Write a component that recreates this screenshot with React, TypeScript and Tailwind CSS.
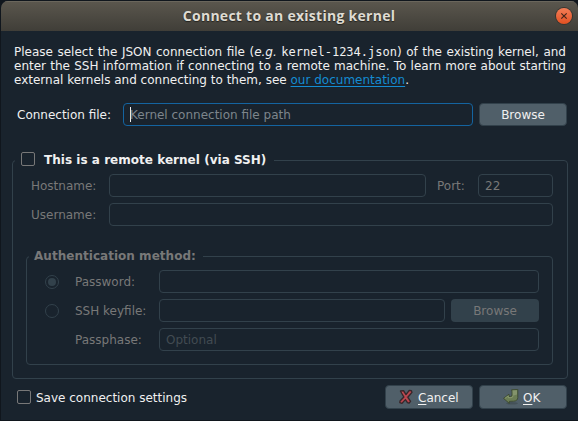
import React from "react";

const inputBase = "flex h-[23px] items-center rounded-[4px] border px-[6px] whitespace-pre";

function Field({ className = "", children }: { className?: string; children?: React.ReactNode }) {
  return <div className={`${inputBase} border-[#32414b] ${className}`}>{children}</div>;
}

function Radio({ checked = false }: { checked?: boolean }) {
  return (
    <span className="flex h-[14px] w-[14px] items-center justify-center rounded-full border border-[#32414b]">
      {checked && <span className="h-2 w-2 rounded-full bg-[#32414b]" />}
    </span>
  );
}

function CancelIcon() {
  return (
    <svg width="16" height="16" viewBox="0 0 16 16">
      <path d="M2.4 2 5.6 1.6 8 5.6 11.2 1.4 13.4 1.6 14 3.4 9.8 8.2 12.6 12.4 11 14.2 9.4 13.6 7.4 10.6 4 14.4 1.8 13.6 2 12 5.8 8Z" fill="#b03f47" stroke="#35272b" strokeWidth="1.3" strokeLinejoin="round" />
      <path d="M4.2 3 7.8 7.6 12.3 3M3.4 12.8 7.7 8.6 10.7 12.6" fill="none" stroke="#c4525b" strokeWidth=".8" />
    </svg>
  );
}

function OkIcon() {
  return (
    <svg width="16" height="16" viewBox="0 0 16 16">
      <ellipse cx="9" cy="14.3" rx="6" ry="1.3" fill="#3d4a50" opacity=".65" />
      <path d="M8.6.8 14.8.4V8.5Q14.7 12 10.5 12.2L6.4 12.3V14.4L.5 9.4 6 5.2V7.5H7.5Q9 7.5 9 6V2.6Z" fill="#6b7d54" stroke="#3c4930" strokeWidth=".9" strokeLinejoin="round" />
      <path d="M9.6 1.6 14 1.3V5.4L9.8 6.8Z" fill="#84946c" />
      <path d="M2 9.3 5.3 6.8V8.7H8Q10 8.6 10 6.8" fill="none" stroke="#8d9d74" strokeWidth=".8" />
    </svg>
  );
}

export default function App() {
  return (
    <div className="h-[421px] w-[578px] bg-[#10161d] pt-px pl-px font-['DejaVu_Sans',sans-serif] text-[12px] leading-[14px] text-[#f0f0f0]">
      <div className="h-[419px] w-[577px] overflow-hidden rounded-t-[7px] bg-[#19232d]">
        <header className="flex h-[30px] items-center bg-linear-to-b from-[#5b574e] to-[#403e38] pr-[6px] pl-[21px] shadow-[inset_0_1px_0_#6a665c]">
          <h1 className="flex-1 text-center font-['Open_Sans',sans-serif] text-[14px] font-bold tracking-[0.27px] text-[#dfdbd2] [text-shadow:0_1px_1px_#24231f]">
            Connect to an existing kernel
          </h1>
          <button className="flex h-4 w-4 items-center justify-center rounded-full bg-linear-to-b from-[#f37d56] to-[#e3501f] shadow-[0_0_0_1px_#38352f]">
            <svg width="8" height="8" viewBox="0 0 8 8">
              <path d="M1.3 1.3 6.7 6.7M6.7 1.3 1.3 6.7" stroke="#47261a" strokeWidth="1.2" />
            </svg>
          </button>
        </header>

        <div className="px-[11px] pt-[14px]">
          <div className="ml-[2px] w-[552px]">
            <p className="[text-align-last:justify]">
              Please select the JSON connection file (<i>e.g.</i>{" "}
              <code className="font-['DejaVu_Sans_Mono',monospace] text-[12px] leading-none whitespace-nowrap">kernel-1234.json</code>) of the existing kernel, and
            </p>
            <p className="[text-align-last:justify]">
              enter the SSH information if connecting to a remote machine. To learn more about starting
            </p>
            <p>
              external kernels and connecting to them, see{" "}
              <a className="text-[#148cd2] underline decoration-1 underline-offset-2">our documentation</a>.
            </p>
          </div>

          <div className="mt-[16px] flex items-center pl-[5px]">
            <span className="w-[106px]">Connection file:</span>
            <div className={`${inputBase} w-[350px] border-[#1464a0] text-[#7d858b]`}>
              <span className="h-[15px] w-px bg-[#f0f0f0]" />
              <span className="-ml-px">Kernel connection file path</span>
            </div>
            <button className="ml-[6px] h-[23px] w-[88px] rounded-[4px] border border-[#32414b] bg-[#505f69]">Browse</button>
          </div>

          <fieldset className="mt-[27px] h-[226px] w-[556px] rounded-[4px] border border-[#32414b] pl-[13px] text-[#787878]">
            <legend className="-ml-[11px] flex h-[15px] w-[259px] items-center pb-px pl-[6px] font-bold text-[#f0f0f0]">
              <span className="-mt-[2px] mr-[9px] h-[14px] w-[14px] rounded-[2px] border border-[#787878]" />
              <span className="-mt-px tracking-[0.03px] whitespace-nowrap">This is a remote kernel (via SSH)</span>
            </legend>
            <div className="mt-[6px] flex items-center pl-[5px]">
              <span className="w-[78px]">Hostname:</span>
              <Field className="w-[317px]" />
              <span className="ml-[11px] w-[41px]">Port:</span>
              <Field className="w-[75px]">22</Field>
            </div>
            <div className="mt-[6px] flex items-center pl-[5px]">
              <span className="w-[78px]">Username:</span>
              <Field className="w-[444px]" />
            </div>

            <fieldset className="mt-[23px] h-[116px] w-[527px] rounded-[4px] border border-[#32414b] pl-[18px]">
              <legend className="-ml-[16px] h-[15px] w-[174px] pl-[5px] font-bold tracking-[0.03px] whitespace-nowrap">Authentication method:</legend>
              <div className="mt-[6px] flex items-center">
                <Radio checked />
                <span className="ml-[16px] w-[84px]">Password:</span>
                <Field className="w-[380px]" />
              </div>
              <div className="mt-[6px] flex items-center">
                <Radio />
                <span className="ml-[16px] w-[84px] whitespace-nowrap">SSH keyfile:</span>
                <Field className="w-[286px]" />
                <button className="ml-[6px] h-[23px] w-[88px] rounded-[4px] bg-[#32414b]">Browse</button>
              </div>
              <div className="mt-[6px] flex items-center pl-[30px]">
                <span className="w-[84px]">Passphase:</span>
                <Field className="w-[380px] text-[#424b52]">Optional</Field>
              </div>
            </fieldset>
          </fieldset>

          <footer className="mt-[6px] flex items-center pl-[5px]">
            <span className="h-[14px] w-[14px] rounded-[2px] border border-[#787878]" />
            <span className="ml-[5px] w-[349px] pt-[2px]">Save connection settings</span>
            <button className="flex h-6 w-[88px] items-center rounded-[4px] border border-[#32414b] bg-[#505f69] pl-[12px]">
              <CancelIcon />
              <span className="ml-[4px] pt-[2px]"><span className="underline underline-offset-2">C</span>ancel</span>
            </button>
            <button className="ml-[6px] flex h-6 w-[88px] items-center rounded-[4px] border border-[#32414b] bg-[#505f69] pl-[23px]">
              <OkIcon />
              <span className="ml-[4px] pt-[2px]"><span className="underline underline-offset-2">O</span>K</span>
            </button>
          </footer>
        </div>
      </div>
    </div>
  );
}
